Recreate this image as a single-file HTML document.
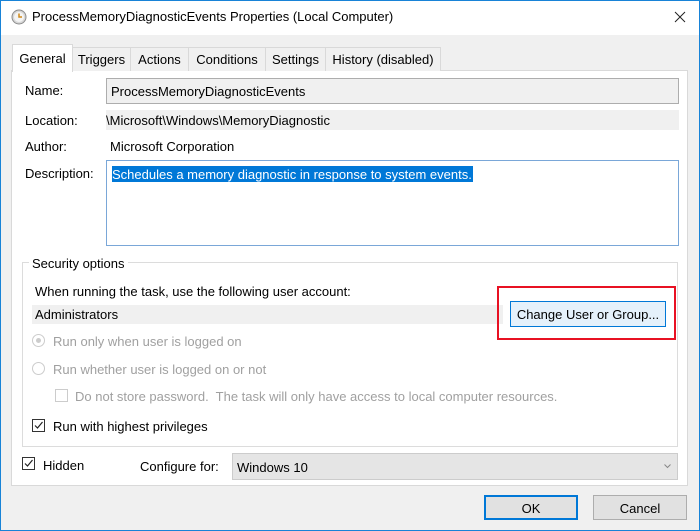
<!DOCTYPE html>
<html><head><meta charset="utf-8"><style>
*{box-sizing:border-box;margin:0;padding:0}
body{width:700px;height:531px;overflow:hidden;background:#f0f0f0;font-family:"Liberation Sans",sans-serif;font-size:13px;color:#000;position:relative}
.a{position:absolute;white-space:nowrap}
.win{position:absolute;left:0;top:0;width:700px;height:531px;border:1px solid #1883d7}
.dis{color:#a0a0a0}
.cb{position:absolute;width:13px;height:13px;border:1px solid #333;background:#fff}
.cb.d{border-color:#ccc}
.rd{position:absolute;width:13px;height:13px;border:1px solid #ccc;border-radius:50%;background:#fff}
.tab{position:absolute;top:47px;height:24px;border:1px solid #d9d9d9;border-bottom:none;background:#f0f0f0;padding:4px 0 0 0;text-align:center}
</style></head><body>
<div class="win"></div>
<div class="a" style="left:1px;top:1px;width:698px;height:34px;background:#fff"></div>
<svg class="a" style="left:11px;top:9px" width="16" height="16" viewBox="0 0 16 16"><circle cx="8" cy="8" r="7" fill="#d8d8d8" stroke="#8a8a8a"/><circle cx="8" cy="8" r="5" fill="#f4f4f4"/><path d="M8 4.5V8h3" stroke="#d08a1a" stroke-width="1.5" fill="none"/></svg>
<div class="a" style="left:32px;top:9px;font-size:13px">ProcessMemoryDiagnosticEvents Properties (Local Computer)</div>
<svg class="a" style="left:674px;top:11px" width="12" height="12"><path d="M1 1L11 11M11 1L1 11" stroke="#222" stroke-width="1"/></svg>

<div class="a" style="left:11px;top:70px;width:677px;height:416px;background:#fff;border:1px solid #d9d9d9"></div>
<div class="tab" style="left:72px;width:59px">Triggers</div>
<div class="tab" style="left:130px;width:59px">Actions</div>
<div class="tab" style="left:188px;width:78px">Conditions</div>
<div class="tab" style="left:265px;width:61px">Settings</div>
<div class="tab" style="left:325px;width:116px">History (disabled)</div>
<div class="tab" style="left:12px;top:44px;width:61px;height:28px;background:#fff;padding-top:6px">General</div>

<div class="a" style="left:25px;top:83px">Name:</div>
<div class="a" style="left:106px;top:78px;width:573px;height:26px;background:#f0f0f0;border:1px solid #adadad;padding:5px 4px">ProcessMemoryDiagnosticEvents</div>
<div class="a" style="left:25px;top:113px">Location:</div>
<div class="a" style="left:106px;top:110px;width:573px;height:20px;background:#f0f0f0;padding:3px 0">\Microsoft\Windows\MemoryDiagnostic</div>
<div class="a" style="left:25px;top:139px">Author:</div>
<div class="a" style="left:110px;top:139px">Microsoft Corporation</div>
<div class="a" style="left:25px;top:166px">Description:</div>
<div class="a" style="left:106px;top:160px;width:573px;height:86px;background:#fff;border:1px solid #7aa7d8"></div>
<div class="a" style="left:112px;top:166px;height:16px;background:#0078d7;color:#fff;padding:1px 1px 0 0">Schedules a memory diagnostic in response to system events.</div>

<div class="a" style="left:22px;top:262px;width:656px;height:185px;border:1px solid #dcdcdc"></div>
<div class="a" style="left:29px;top:256px;background:#fff;padding:0 3px">Security options</div>
<div class="a" style="left:35px;top:284px">When running the task, use the following user account:</div>
<div class="a" style="left:32px;top:305px;width:471px;height:19px;background:#f0f0f0;padding:2px 3px">Administrators</div>
<div class="a" style="left:510px;top:301px;width:156px;height:26px;background:#e5f1fb;border:1px solid #0078d7;text-align:center;padding-top:5px">Change User or Group...</div>
<div class="a" style="left:497px;top:286px;width:179px;height:54px;border:2px solid #e81123"></div>

<div class="rd" style="left:32px;top:334px"></div><div class="a" style="left:36px;top:338px;width:5px;height:5px;border-radius:50%;background:#ccc"></div>
<div class="a dis" style="left:53px;top:334px">Run only when user is logged on</div>
<div class="rd" style="left:32px;top:362px"></div>
<div class="a dis" style="left:53px;top:362px">Run whether user is logged on or not</div>
<div class="cb d" style="left:55px;top:389px"></div>
<div class="a dis" style="left:75px;top:389px">Do not store password.&nbsp; The task will only have access to local computer resources.</div>
<div class="cb" style="left:32px;top:419px"></div><svg class="a" style="left:33px;top:420px" width="11" height="11"><path d="M2 5.5L4.5 8L9.5 2" stroke="#222" stroke-width="1.2" fill="none"/></svg>
<div class="a" style="left:53px;top:419px">Run with highest privileges</div>

<div class="cb" style="left:22px;top:457px"></div><svg class="a" style="left:23px;top:458px" width="11" height="11"><path d="M2 5.5L4.5 8L9.5 2" stroke="#222" stroke-width="1.2" fill="none"/></svg>
<div class="a" style="left:43px;top:458px">Hidden</div>
<div class="a" style="left:140px;top:459px">Configure for:</div>
<div class="a" style="left:232px;top:453px;width:446px;height:27px;background:#e5e5e5;border:1px solid #ccc;padding:6px 4px">Windows 10</div>
<svg class="a" style="left:664px;top:464px" width="7" height="5"><path d="M0.5 0.5L3.5 3.5L6.5 0.5" stroke="#888" fill="none"/></svg>

<div class="a" style="left:484px;top:495px;width:94px;height:25px;background:#e1e1e1;border:2px solid #0078d7;text-align:center;padding-top:4px">OK</div>
<div class="a" style="left:593px;top:495px;width:94px;height:25px;background:#e1e1e1;border:1px solid #adadad;text-align:center;padding-top:5px">Cancel</div>
</body></html>
